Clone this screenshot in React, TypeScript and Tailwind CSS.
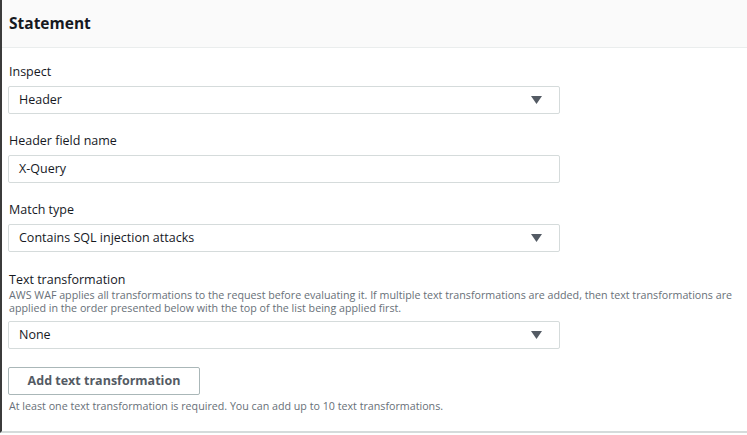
import { useState } from 'react';

const fieldBox =
  'w-[552px] h-[28px] border border-[#d5dbdb] rounded-[2px] bg-white flex items-center px-[10px] text-[12.5px] text-[#16191f]';

function Caret() {
  return (
    <svg width="11" height="8" viewBox="0 0 11 8" className="ml-auto mr-[7px]">
      <path d="M0 0 L11 0 L5.5 8 Z" fill="#545b64" />
    </svg>
  );
}

function SelectField({ value }: { value: string }) {
  return (
    <div className={fieldBox}>
      <span>{value}</span>
      <Caret />
    </div>
  );
}

export default function App() {
  const [name] = useState('X-Query');

  return (
    <div
      className="w-[747px] h-[435px] bg-white overflow-hidden"
      style={{ fontFamily: '"Open Sans", "Noto Sans", sans-serif' }}
    >
      <div className="border-l-2 border-[#3b3b3b] h-[433px] border-b-2 border-b-[#d5dbdb] flex flex-col">
        {/* Header */}
        <div className="h-[48px] bg-[#fafafa] border-b border-[#eaeded] flex items-center px-[7px]">
          <h2 className="text-[15.5px] font-bold text-[#16191f]">Statement</h2>
        </div>

        {/* Body */}
        <div className="pl-[6px] pr-0 pt-[15px] flex flex-col">
          <label className="text-[12.5px] text-[#16191f] leading-[18px] pl-[1px]">Inspect</label>
          <div className="mt-[5px]">
            <SelectField value="Header" />
          </div>

          <label className="text-[12.5px] text-[#16191f] leading-[18px] pl-[1px] mt-[18px]">
            Header field name
          </label>
          <div className="mt-[5px]">
            <div className={fieldBox}>{name}</div>
          </div>

          <label className="text-[12.5px] text-[#16191f] leading-[18px] pl-[1px] mt-[18px]">Match type</label>
          <div className="mt-[5px]">
            <SelectField value="Contains SQL injection attacks" />
          </div>

          <label className="text-[12.5px] text-[#16191f] leading-[18px] pl-[1px] mt-[19px]">
            Text transformation
          </label>
          <p className="text-[10.7px] text-[#687078] leading-[13px] pl-[1px]">
            AWS WAF applies all transformations to the request before evaluating it. If multiple text
            transformations are added, then text transformations are applied in the order presented below
            with the top of the list being applied first.
          </p>
          <div className="mt-[6px]">
            <SelectField value="None" />
          </div>

          <div className="mt-[18px]">
            <button className="w-[192px] h-[28px] border border-[#aab7b8] rounded-[2px] bg-white text-[12.5px] font-bold text-[#545b64]">
              Add text transformation
            </button>
          </div>
          <p className="text-[10.7px] text-[#687078] leading-[13px] pl-[1px] mt-[5px]">
            At least one text transformation is required. You can add up to 10 text transformations.
          </p>
        </div>
      </div>
    </div>
  );
}
